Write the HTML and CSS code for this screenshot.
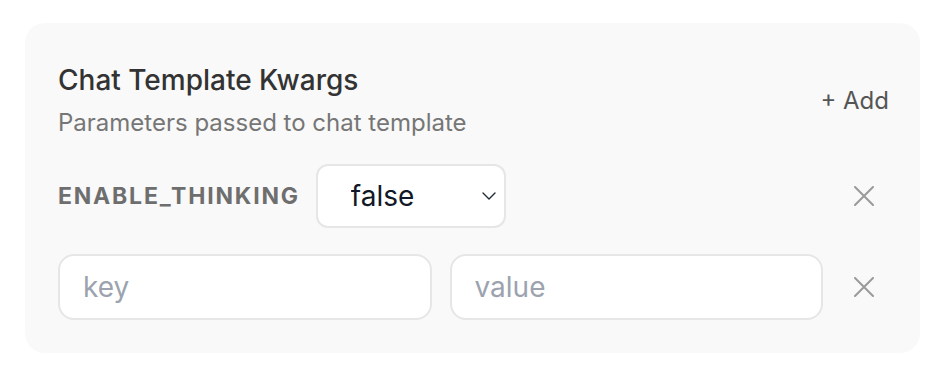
FILE: index.html
```html
<!DOCTYPE html>
<html lang="en">
<head>
<meta charset="utf-8">
<title>Chat Template Kwargs</title>
<link rel="stylesheet" href="styles.css">
</head>
<body>
<section class="card">
  <header class="header">
    <div class="titles">
      <h2 class="title">Chat Template Kwargs</h2>
      <p class="subtitle">Parameters passed to chat template</p>
    </div>
    <button class="add" type="button">+ Add</button>
  </header>
  <div class="rows">
    <div class="row">
      <span class="key-label">enable_thinking</span>
      <div class="select-wrap">
        <select class="select">
          <option>false</option>
          <option>true</option>
        </select>
        <svg class="chev" viewBox="0 0 14 8" width="14" height="8"><path d="M1 1l6 6 6-6" fill="none" stroke="#1f2937" stroke-width="1.4" stroke-linecap="round" stroke-linejoin="round"/></svg>
      </div>
      <span class="spacer"></span>
      <button class="remove" type="button" aria-label="Remove">
        <svg viewBox="0 0 20 20" width="20" height="20"><path d="M1 1L19 19M19 1L1 19" stroke="#9a9a9a" stroke-width="2" stroke-linecap="round"/></svg>
      </button>
    </div>
    <div class="row">
      <input class="field" type="text" placeholder="key">
      <input class="field" type="text" placeholder="value">
      <button class="remove" type="button" aria-label="Remove">
        <svg viewBox="0 0 20 20" width="20" height="20"><path d="M1 1L19 19M19 1L1 19" stroke="#9a9a9a" stroke-width="2" stroke-linecap="round"/></svg>
      </button>
    </div>
  </div>
</section>
</body>
</html>
```
FILE: styles.css
```css
* { box-sizing: border-box; }
body {
  margin: 0;
  padding: 23px 24px 0 25px;
  background: #ffffff;
  font-family: Inter, "Noto Sans", sans-serif;
}
.card {
  background: #f9f9f9;
  border-radius: 20px;
  padding: 36px 33px 33px;
}
.header {
  display: flex;
  align-items: center;
  justify-content: space-between;
  margin-bottom: 23px;
}
.title {
  margin: 0;
  font-size: 28px;
  line-height: 42px;
  font-weight: 500;
  color: #333333;
}
.subtitle {
  margin: 4px 0 0;
  font-size: 24px;
  line-height: 36px;
  font-weight: 400;
  color: #767676;
}
.add {
  border: 0;
  background: none;
  padding: 0;
  margin-right: -2px;
  font-family: inherit;
  font-size: 24px;
  font-weight: 400;
  color: #555555;
}
.rows {
  display: flex;
  flex-direction: column;
  gap: 26px;
}
.row {
  display: flex;
  align-items: center;
  gap: 18px;
}
.key-label {
  font-size: 23px;
  font-weight: 700;
  text-transform: uppercase;
  letter-spacing: 1.8px;
  color: #6e6e6e;
  margin-right: -2px;
}
.select-wrap {
  position: relative;
  width: 190px;
  height: 64px;
}
.select {
  appearance: none;
  -webkit-appearance: none;
  width: 100%;
  height: 100%;
  border: 2px solid #e6e6e6;
  border-radius: 12px;
  background: #ffffff;
  padding: 0 0 0 33px;
  font-family: inherit;
  font-size: 28px;
  color: #111827;
}
.chev {
  position: absolute;
  right: 10px;
  top: 28px;
  pointer-events: none;
}
.spacer { flex: 1; }
.field {
  flex: 1;
  min-width: 0;
  height: 66px;
  border: 2px solid #e6e6e6;
  border-radius: 16px;
  background: #ffffff;
  padding: 0 23px;
  font-family: inherit;
  font-size: 28px;
  color: #111827;
}
.field::placeholder { color: #9ca3af; }
.remove {
  width: 46px;
  height: 46px;
  border: 0;
  background: none;
  padding: 0;
  display: flex;
  align-items: center;
  justify-content: center;
}
```
